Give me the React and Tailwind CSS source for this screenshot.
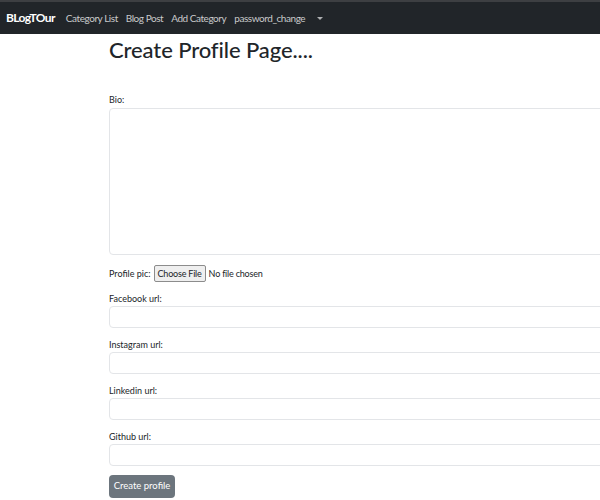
const NavLink = ({ children }) => (
  <a className="text-[10px] tracking-[-0.45px] text-[#c9cacb] mr-[8px]">{children}</a>
);

const Field = ({ label }) => (
  <div className="mb-[11px]">
    <label className="block text-[9px] text-[#212529] leading-[12px] mb-[1px]">{label}</label>
    <input
      type="text"
      className="block w-[520px] h-[22px] border border-[#e3e5e8] rounded-[4px] bg-white"
    />
  </div>
);

export default function App() {
  return (
    <div className="w-[600px] h-[500px] overflow-hidden bg-white font-['Lato','Open_Sans',sans-serif]">
      <nav className="h-[34px] bg-[#212529] border-t-[2px] border-[#3d3f42] flex items-center pl-[6px]">
        <span className="text-[12px] font-bold text-white mr-[11px] tracking-[-0.6px]">BLogTOur</span>
        <NavLink>Category List</NavLink>
        <NavLink>Blog Post</NavLink>
        <NavLink>Add Category</NavLink>
        <NavLink>password_change</NavLink>
        <span className="ml-[4px] w-0 h-0 border-l-[3px] border-r-[3px] border-t-[3px] border-l-transparent border-r-transparent border-t-[#aeb0b2]" />
      </nav>
      <div className="pl-[109px]">
        <h1 className="text-[22px] font-medium text-[#212529] leading-[28px] tracking-[-0.1px] mt-[2px]">
          Create Profile Page....
        </h1>
        <form className="mt-[30px]">
          <label className="block text-[9px] text-[#212529] leading-[12px] mb-[2px]">Bio:</label>
          <textarea className="block w-[520px] h-[147px] border border-[#e3e5e8] rounded-[4px] bg-white" />
          <div className="flex items-center mt-[10px] mb-[11px] h-[17px] text-[9px] text-[#212529]">
            <span className="mr-[3px]">Profile pic:</span>
            <span className="border border-[#8c8c8c] bg-[#efefef] rounded-[2px] px-[3px] h-[17px] flex items-center mr-[3px] tracking-[-0.2px]">
              Choose File
            </span>
            <span className="tracking-[-0.2px]">No file chosen</span>
          </div>
          <Field label="Facebook url:" />
          <Field label="Instagram url:" />
          <Field label="Linkedin url:" />
          <Field label="Github url:" />
          <button
            type="button"
            className="block -mt-[2px] h-[23px] w-[66px] bg-[#6c757d] text-white text-[9.5px] rounded-[4px]"
          >
            Create profile
          </button>
        </form>
      </div>
    </div>
  );
}
